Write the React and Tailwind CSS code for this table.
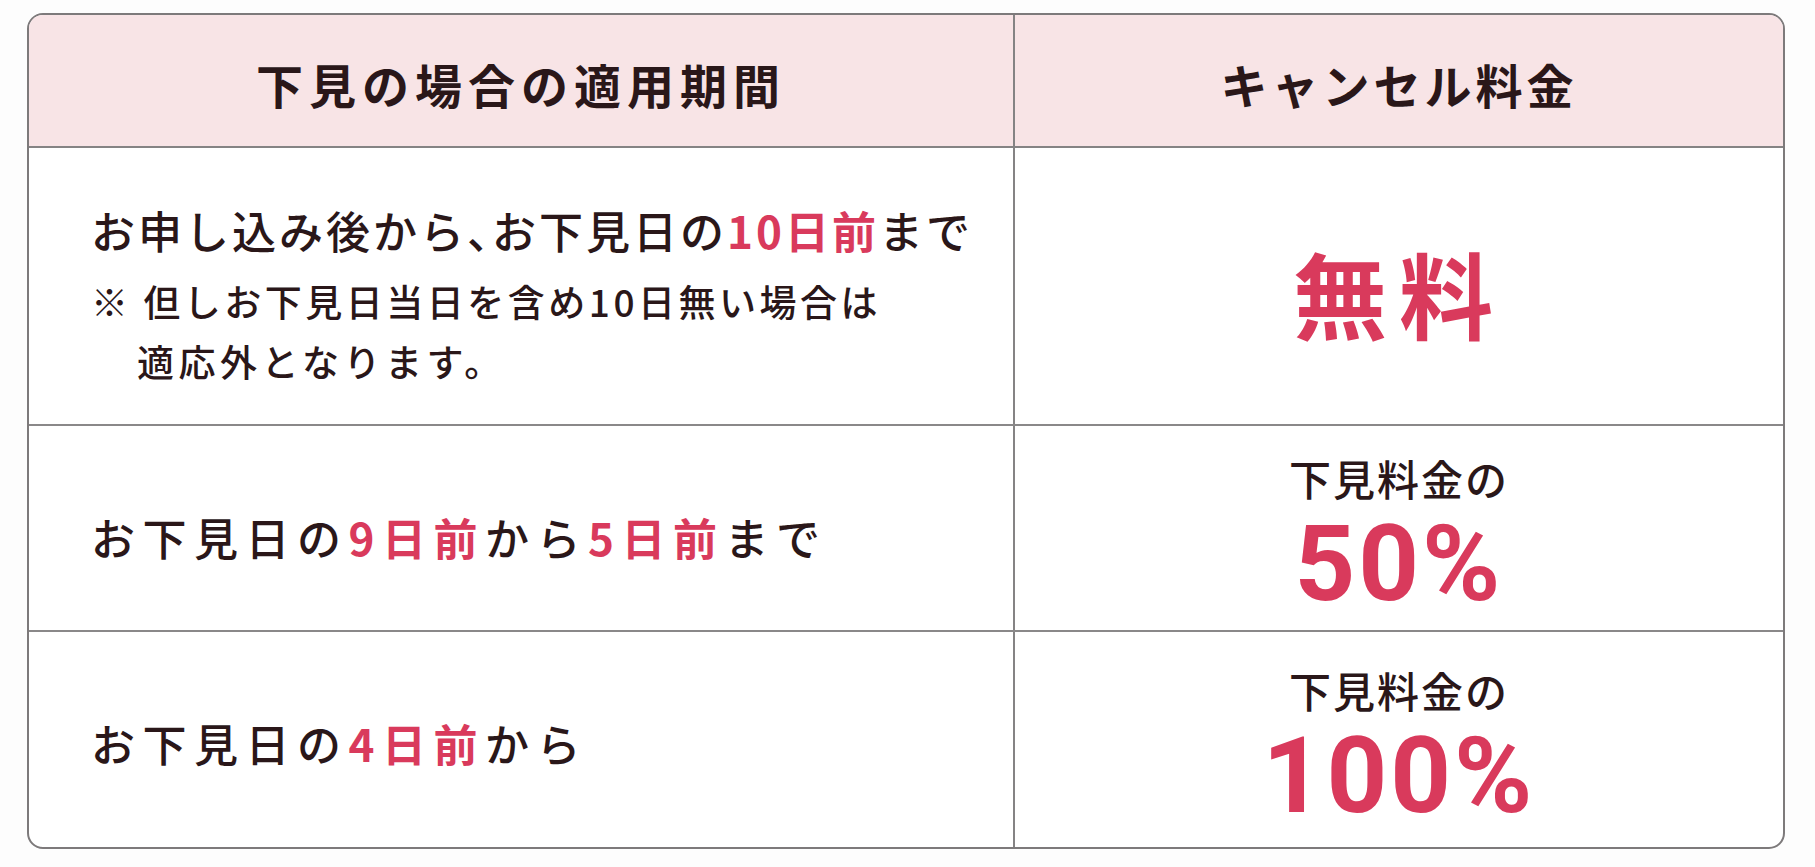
import React from 'react';

const font = { fontFamily: '"Noto Sans CJK JP", "Noto Sans", sans-serif' };

// rows of the cancellation table
const ROWS = [
  {
    key: 'free',
    height: 'h-[278px]',
    left: (
      <div className="flex flex-col pt-[16px]">
        <p className="text-[44px] leading-[66px] tracking-[3px] font-medium text-[#2a1719]">
          お申し込み後から
          <span className="[font-feature-settings:'halt']">、</span>
          お下見日の
          <span className="text-[#d93a5c] font-bold">10日前</span>
          まで
        </p>
        <p className="mt-[8px] text-[37px] leading-[60px] tracking-[3.5px] font-medium text-[#2a1719]">
          ※ 但しお下見日当日を含め10日無い場合は
        </p>
        <p className="pl-[46px] text-[37px] leading-[60px] tracking-[4.5px] font-medium text-[#2a1719]">
          適応外となります。
        </p>
      </div>
    ),
    right: (
      <p className="pt-[12px] text-[94px] leading-none tracking-[12px] font-bold text-[#d93a5c]">
        無料
      </p>
    ),
  },
  {
    key: 'half',
    height: 'h-[206px]',
    left: (
      <p className="pt-[18px] text-[44px] leading-[66px] tracking-[7.5px] font-medium text-[#2a1719]">
        お下見日の
        <span className="text-[#d93a5c] font-bold">9日前</span>
        から
        <span className="text-[#d93a5c] font-bold">5日前</span>
        まで
      </p>
    ),
    percent: '50%',
  },
  {
    key: 'full',
    height: 'h-[215px]',
    left: (
      <p className="pt-[6px] text-[44px] leading-[66px] tracking-[7.5px] font-medium text-[#2a1719]">
        お下見日の
        <span className="text-[#d93a5c] font-bold">4日前</span>
        から
      </p>
    ),
    percent: '100%',
  },
];

function FeeCell({ percent }) {
  return (
    <div className="flex flex-col items-center pt-[16px]">
      <p className="text-[42px] leading-[56px] tracking-[2px] font-medium text-[#2a1719]">
        下見料金の
      </p>
      <p className="font-['Roboto',sans-serif] text-[106px] leading-[116px] tracking-[3px] font-bold text-[#d93a5c]">
        {percent}
      </p>
    </div>
  );
}

export default function App() {
  return (
    <div
      className="w-[1815px] h-[867px] bg-[#fdfdfd] pl-[27px] pr-[30px] pt-[13px]"
      style={font}
    >
      <div className="rounded-[16px] border-2 border-[#7d7a7b] overflow-hidden bg-white">
        {/* Header */}
        <div className="flex h-[133px] bg-[#f8e4e6] border-b-2 border-[#858384]">
          <div className="w-[986px] flex items-center justify-center border-r-2 border-[#858384]">
            <h2 className="pt-[8px] text-[47px] tracking-[6px] font-semibold text-[#2a1719]">
              下見の場合の適用期間
            </h2>
          </div>
          <div className="flex-1 flex items-center justify-center">
            <h2 className="pt-[8px] text-[47px] tracking-[4px] font-semibold text-[#2a1719]">
              キャンセル料金
            </h2>
          </div>
        </div>

        {/* Body rows */}
        {ROWS.map((row, i) => (
          <div
            key={row.key}
            className={`flex ${row.height} ${
              i < ROWS.length - 1 ? 'border-b-2 border-[#8a8889]' : ''
            }`}
          >
            <div className="w-[986px] flex items-center pl-[62px] border-r-2 border-[#858384]">
              {row.left}
            </div>
            <div className="flex-1 flex items-center justify-center">
              {row.percent ? <FeeCell percent={row.percent} /> : row.right}
            </div>
          </div>
        ))}
      </div>
    </div>
  );
}
